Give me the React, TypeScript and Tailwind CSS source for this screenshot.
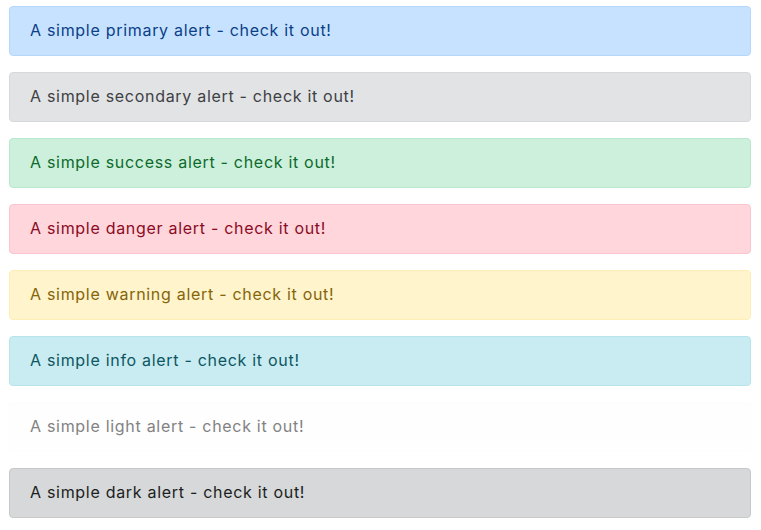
const alerts = [
  { name: 'primary', cls: 'bg-[#c7e2ff] border-[#b5d7fc] text-[#0b3f87]' },
  { name: 'secondary', cls: 'bg-[#e2e3e5] border-[#d6d8db] text-[#3d4043]' },
  { name: 'success', cls: 'bg-[#ccf0db] border-[#b9e8cd] text-[#0e6a2c]' },
  { name: 'danger', cls: 'bg-[#ffd6dc] border-[#fcc5cd] text-[#8a0b23]' },
  { name: 'warning', cls: 'bg-[#fff4cb] border-[#feeeb6] text-[#86640a]' },
  { name: 'info', cls: 'bg-[#c8ecf1] border-[#b7e3ea] text-[#0d5661]' },
  { name: 'light', cls: 'bg-[#fefefe] border-[#fdfdfe] text-[#828283]' },
  { name: 'dark', cls: 'bg-[#d6d8d9] border-[#c6c8ca] text-[#1b1e21]' },
]

export default function App() {
  return (
    <div className="min-h-[530px] bg-white pl-[9px] pr-[10px] pt-[6px] font-['Inter',sans-serif]">
      {alerts.map((a) => (
        <div
          key={a.name}
          role="alert"
          className={`mb-4 rounded border px-5 pb-[13px] pt-[11px] text-[16px] leading-6 tracking-[0.7px] ${a.cls}`}
        >
          A simple {a.name} alert - check it out!
        </div>
      ))}
    </div>
  )
}
